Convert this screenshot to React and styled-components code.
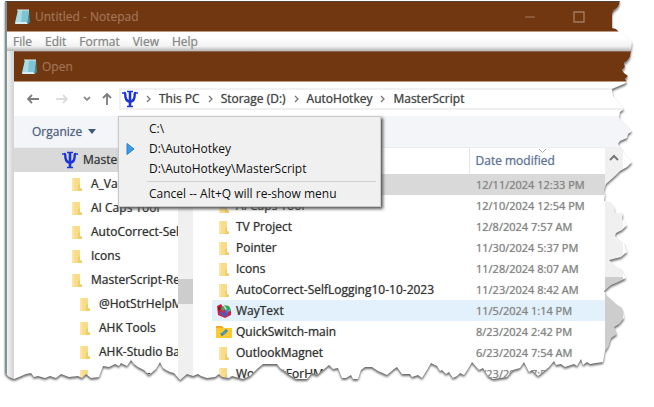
import React from "react";
import styled, { createGlobalStyle } from "styled-components";

const Global = createGlobalStyle`
  *, *::before, *::after { box-sizing: border-box; }
  body { margin: 0; background: #fff; overflow: hidden; }
  button { font: inherit; color: inherit; background: none; border: 0; padding: 0; margin: 0; text-align: left; text-shadow: inherit; cursor: default; white-space: nowrap; }
  ul { list-style: none; margin: 0; padding: 0; }
  svg { flex: none; }
`;

const Page = styled.main`
  position: relative;
  min-height: 100vh;
  overflow: hidden;
  background: #fff;
  font: 12px/20px "Open Sans", "Noto Sans", sans-serif;
  color: #333;
`;

const NotepadWindow = styled.div`
  margin: 1px 20px 0 5px;
  border-left: 2px solid #7f9499;
  border-top: 1px solid #49443c;
`;

const TitleBar = styled.header`
  display: flex;
  align-items: center;
  gap: 4px;
  height: 30px;
  padding: 0 ${(p) => p.$right || 0}px 0 7px;
  background: #703710;
  border-bottom: 1px solid #bd9a84;
  color: #a17254;
  text-shadow: 0 0 1px #8a5838;
`;

const TitleText = styled.span`
  flex: 1;
`;

const CaptionButton = styled.button`
  display: flex;
  align-items: center;
  justify-content: center;
  width: 45px;
  height: 28px;
`;

const MenuBar = styled.nav`
  display: flex;
  gap: 13px;
  height: 19px;
  padding-left: 6px;
  background: linear-gradient(#fff 30%, #f2f2f2 75%, #b5b5b5);
  color: #8a8a8a;
  text-shadow: 0 0 1px #aaa;
  line-height: 18px;
`;

const DialogFrame = styled.div`
  padding-left: 7px;
  background: linear-gradient(90deg, #f4f4f4, #d2d2d2) 0 0 / 7px 100% no-repeat;
`;

const Dialog = styled.section`
  background: #fff;
  border-top: 1px solid #8a6750;
  text-shadow: 0 0 1px #777;
`;

const NavRow = styled.div`
  display: flex;
  align-items: center;
  height: 34px;
  padding-left: 7px;
`;

const NavButton = styled.button`
  display: flex;
  align-items: center;
  justify-content: center;
  width: ${(p) => p.$width}px;
`;

const AddressBar = styled.div`
  display: flex;
  align-items: center;
  flex: 1;
  height: 22px;
  border: 2px solid #f0f0f0;
  border-right: 0;
  padding-left: 1px;
`;

const Crumb = styled.button`
  color: #444;
`;

const Chevron = styled.svg`
  width: 5px;
  height: 8px;
  margin: 0 8px;
`;

const ToolRow = styled.div`
  display: flex;
  align-items: center;
  height: 32px;
  padding-left: 18px;
  background: #f4f5f8;
  border-bottom: 1px solid #eceef2;
  color: #51617c;
  text-shadow: 0 0 1px #8f9bb0;
`;

const Organize = styled.button`
  display: flex;
  align-items: center;
  gap: 6px;
`;

const Browser = styled.div`
  display: flex;
  padding-right: 11px;
`;

const Tree = styled.ul`
  flex: none;
  width: 164px;
  overflow: hidden;
`;

const TreeRow = styled.li`
  height: 24px;
  padding-left: ${(p) => p.$indent}px;
  background: ${(p) => (p.$selected ? "#d9d9d9" : "transparent")};
`;

const TreeButton = styled.button`
  display: flex;
  align-items: center;
  gap: ${(p) => p.$gap}px;
  height: 24px;
  width: 100%;
`;

const ScrollTrack = styled.div`
  flex: none;
  display: flex;
  flex-direction: column;
  align-items: center;
  width: ${(p) => p.$width}px;
  background: #f0f0f0;
`;

const ScrollArrow = styled.button`
  display: flex;
  align-items: center;
  justify-content: center;
  width: 100%;
  height: 18px;
`;

const ScrollThumb = styled.div`
  width: 100%;
  height: ${(p) => p.$height}px;
  margin-top: ${(p) => p.$top}px;
  background: #cdcdcd;
`;

const Listing = styled.div`
  flex: 1;
  padding-left: 19px;
`;

const FileTable = styled.table`
  width: 100%;
  border-collapse: collapse;
  table-layout: fixed;
`;

const HeadCell = styled.th`
  position: relative;
  width: ${(p) => p.$width || "auto"};
  height: 26px;
  padding: 0 0 0 6px;
  border-left: ${(p) => (p.$width ? "1px solid #e6e6e6" : "0")};
  text-align: left;
  font-weight: 400;
  color: #5f7290;
  text-shadow: 0 0 1px #9caabd;
`;

const SortMark = styled.svg`
  position: absolute;
  top: 0;
  left: 68px;
`;

const FileRow = styled.tr`
  height: 21px;
  background: ${(p) => p.$tone || "transparent"};
`;

const NameCell = styled.td`
  padding: 0 0 0 4px;
`;

const FileLabel = styled.div`
  display: flex;
  align-items: center;
  height: 21px;
  gap: 4px;
  white-space: nowrap;
`;

const DateCell = styled.td`
  padding: 0 0 0 7px;
  color: #858585;
  font-size: 11px;
  white-space: nowrap;
  text-shadow: 0 0 1px #999;
`;

const PopupMenu = styled.ul`
  && { padding: 2px; }
  position: absolute;
  left: 118px;
  top: 116px;
  width: 263px;
  background: #f0f0f0;
  border: 1px solid #c8c8c8;
  box-shadow: 2px 2px 3px #555;
  color: #111;
`;

const PopupItem = styled.li`
  height: 20px;
`;

const PopupButton = styled.button`
  display: grid;
  grid-template-columns: 28px 1fr;
  align-items: center;
  width: 100%;
  height: 20px;
`;

const PopupLabel = styled.span`
  grid-column: 2;
`;

const PopupRule = styled.li`
  height: 1px;
  margin: 2px 2px 2px 26px;
  background: #cfcfcf;
`;

const TornEdge = styled.svg`
  position: absolute;
  inset: 0;
  width: 100%;
  height: 100%;
  pointer-events: none;
`;

const NotepadIcon = () => (
  <svg width="17" height="17" viewBox="0 0 17 17" aria-hidden="true">
    <path d="M4 2H15L16 14L14 16H1Z" fill="#4e8792" />
    <path d="M4 2H15L13 15H1Z" fill="#a9dde5" />
    <path d="M8 2H15L13 15H7Z" fill="#7fc4d2" />
    <path d="M2 14L12 14L14 16H1Z" fill="#d5eef2" />
    <path d="M4 1V3M6 1V3M8 1V3M10 1V3M12 1V3M14 1V3" stroke="#d9e9ea" />
  </svg>
);

const PsiIcon = () => (
  <svg width="16" height="18" viewBox="0 0 16 18" aria-hidden="true" fill="none" stroke="#1c35d8">
    <path d="M8 2V16" strokeWidth="2.6" />
    <path d="M2 3C4 3 3 5 3.500 7C4 10 6 11.500 8 11.500C10 11.500 12 10 12.500 7C13 5 12 3 14 3" strokeWidth="2.4" />
    <path d="M5 1.5H11M5 16.5H11M0 3H4M12 3H16" strokeWidth="1.3" />
  </svg>
);

const FolderIcon = () => (
  <svg width="16" height="16" viewBox="0 0 16 16" aria-hidden="true">
    <path d="M3 2H11V12L13 13V15H3Z" fill="#f8dc8a" />
    <path d="M3 2H5V14L3 15Z" fill="#fbe6a6" />
    <path d="M9 9L11 8V12L13 13V15H9Z" fill="#f0cd6c" />
  </svg>
);

const WayTextIcon = () => (
  <svg width="16" height="16" viewBox="0 0 16 16" aria-hidden="true">
    <path d="M1 3L5 1L7 4L12 9L15 7V12L9 15L2 12Z" fill="#d5203a" />
    <path d="M4 8L8 10L12 8V12L8 14L4 11Z" fill="#5a55b8" />
    <path d="M5 5L8 3L9 7L6 8Z" fill="#3fa35a" />
    <path d="M8 2L13 3L15 7L12 8L10 5Z" fill="#39a84f" />
    <path d="M9 7L12 6L13 9L10 10Z" fill="#3688d5" />
    <path d="M2 4L5 3L4 7L2 8Z" fill="#8b1630" />
  </svg>
);

const LinkFolderIcon = () => (
  <svg width="16" height="16" viewBox="0 0 16 16" aria-hidden="true">
    <path d="M0 2H6L8 4H16V14H0Z" fill="#f0a91d" />
    <path d="M0 4H16V14H0Z" fill="#ffc931" />
    <path d="M5 11L8 9M8 9L11 6" stroke="#3a8bb0" strokeWidth="3" />
    <path d="M6 10L10 7" stroke="#69a9a0" strokeWidth="1" />
  </svg>
);

const Sep = () => (
  <Chevron viewBox="0 0 5 8" aria-hidden="true">
    <path d="M1 1L4 4L1 7" fill="none" stroke="#777" strokeWidth="1.3" />
  </Chevron>
);

const Arrow = ({ d, color, w = 14 }) => (
  <svg width={w} height="14" viewBox={`0 0 ${w} 14`} aria-hidden="true">
    <path d={d} fill="none" stroke={color} strokeWidth="1.8" />
  </svg>
);

const treeItems = [
  { name: "MasterScript", indent: 48, icon: PsiIcon, gap: 5, selected: true },
  { name: "A_Variables", indent: 55 },
  { name: "AI Caps Tool", indent: 55 },
  { name: "AutoCorrect-Self", indent: 55 },
  { name: "Icons", indent: 55 },
  { name: "MasterScript-Rel", indent: 55 },
  { name: "@HotStrHelpM", indent: 63 },
  { name: "AHK Tools", indent: 63 },
  { name: "AHK-Studio Ba", indent: 63 },
  { name: "AutoCorrects", indent: 63 },
];

const files = [
  { name: "AutoCorrect2", date: "12/11/2024 12:33 PM", tone: "#d9d9d9" },
  { name: "AI Caps Tool", date: "12/10/2024 12:54 PM" },
  { name: "TV Project", date: "12/8/2024 7:57 AM" },
  { name: "Pointer", date: "11/30/2024 5:37 PM" },
  { name: "Icons", date: "11/28/2024 8:07 AM" },
  { name: "AutoCorrect-SelfLogging10-10-2023", date: "11/23/2024 8:42 AM" },
  { name: "WayText", date: "11/5/2024 1:14 PM", tone: "#e3f1fd", icon: WayTextIcon },
  { name: "QuickSwitch-main", date: "8/23/2024 2:42 PM", icon: LinkFolderIcon },
  { name: "OutlookMagnet", date: "6/23/2024 7:54 AM" },
  { name: "WordListForHM", date: "6/23/2024 7:54 AM" },
];

const paper =
  "M5 0H620L619 5L617 8L614 10L612 14V28L616 29L619 32L627 37L632 42L631 51L630 57L627 61L624 63L625 67L622 70L624 73L628 76L625 79L627 82L624 84L619 86L612 89L613 96L618 102L624 109L620 112L619 118L625 124L632 131L628 134L627 138L620 141L618 144L622 150L626 156L632 162L627 167L620 171L615 176L606 184L604 190L605 195L604 201L610 202L614 207L615 213H623L622 219L627 225L622 230L616 233L615 236L619 240L624 243L627 252L621 257L609 260L615 266L621 269L626 278L618 282L611 285L604 291L607 296L613 301L616 304L622 308L624 318L619 324L614 327L617 334L611 338L608 347L605 351L603 362L596 363L590 364L587 362L583 365L581 359L577 366L574 364L565 367L561 364L556 365L554 361L549 367L542 373L538 376L532 370L529 372L524 362L520 368L513 370L507 377L493 379L488 376L483 368L479 370L472 362L468 369L464 375L460 373L457 376L453 378L449 372L446 374L442 370L440 371L437 366L431 363L427 370L422 378L418 375L412 377L410 374L402 374L397 367L394 369L387 375L378 371L372 367L365 367L361 370L358 379H353L351 375L346 378H342L338 368L333 369L329 365L323 370L317 375L312 373L307 379H296L288 374L280 368L277 364H263L257 369L250 376L243 379L232 376L229 378L222 377L219 374L215 377L207 378L201 376L198 374L193 376L187 374L180 380L174 373L170 372L166 370L163 368L160 362L156 369L149 375L144 370L138 367L134 364L131 360L127 366L121 363L119 366L115 364L109 367L103 366L99 377L91 378L86 374L82 378L78 376L69 377L61 374L56 378L50 376L45 378L38 376L34 377L31 373L26 374L19 377L14 379L9 377L5 373Z";

const outside = `M0 0V420H660V-10H0Z ${paper}`;

export default function App() {
  return (
    <Page>
      <Global />
      <NotepadWindow>
        <TitleBar $right={33}>
          <NotepadIcon />
          <TitleText>Untitled - Notepad</TitleText>
          <CaptionButton aria-label="Minimize">
            <svg width="12" height="12" viewBox="0 0 12 12"><path d="M1 6H11" stroke="#a57a5e" /></svg>
          </CaptionButton>
          <CaptionButton aria-label="Maximize">
            <svg width="12" height="12" viewBox="0 0 12 12"><path d="M1 1H11V11H1Z" fill="none" stroke="#a57a5e" strokeWidth="1.4" /></svg>
          </CaptionButton>
        </TitleBar>
        <MenuBar aria-label="Notepad menu">
          {["File", "Edit", "Format", "View", "Help"].map((m) => (
            <button key={m}>{m}</button>
          ))}
        </MenuBar>
        <DialogFrame>
          <Dialog aria-label="Open">
            <TitleBar>
              <NotepadIcon />
              <TitleText>Open</TitleText>
            </TitleBar>
            <NavRow>
              <NavButton $width={24} aria-label="Back">
                <Arrow d="M13 7H2M6 3L2 7L6 11" color="#7d7d7d" />
              </NavButton>
              <NavButton $width={34} aria-label="Forward">
                <Arrow d="M1 7H12M8 3L12 7L8 11" color="#dcdcdc" />
              </NavButton>
              <NavButton $width={16} aria-label="Recent locations">
                <Arrow d="M1 5L4 8L7 5" color="#8f8f8f" w={8} />
              </NavButton>
              <NavButton $width={24} aria-label="Up">
                <Arrow d="M7 13V2M3 6L7 2L11 6" color="#7d7d7d" />
              </NavButton>
              <AddressBar>
                <PsiIcon />
                <Sep />
                <Crumb>This PC</Crumb>
                <Sep />
                <Crumb>Storage (D:)</Crumb>
                <Sep />
                <Crumb>AutoHotkey</Crumb>
                <Sep />
                <Crumb>MasterScript</Crumb>
              </AddressBar>
            </NavRow>
            <ToolRow>
              <Organize>
                Organize
                <svg width="8" height="5" viewBox="0 0 8 5" aria-hidden="true"><path d="M0 0H8L4 5Z" fill="#3d5878" /></svg>
              </Organize>
            </ToolRow>
            <Browser>
              <Tree>
                {treeItems.map(({ name, indent, icon: Icon = FolderIcon, gap = 6, selected }) => (
                  <TreeRow key={name} $indent={indent} $selected={selected}>
                    <TreeButton $gap={gap}>
                      <Icon />
                      {name}
                    </TreeButton>
                  </TreeRow>
                ))}
              </Tree>
              <ScrollTrack $width={15}>
                <ScrollThumb $top={131} $height={25} />
              </ScrollTrack>
              <Listing>
                <FileTable>
                  <thead>
                    <tr>
                      <HeadCell aria-label="Name" />
                      <HeadCell $width="136px">
                        Date modified
                        <SortMark width="9" height="6" viewBox="0 0 9 6" aria-hidden="true">
                          <path d="M1 1L4.500 4.500L8 1" fill="none" stroke="#aaa" />
                        </SortMark>
                      </HeadCell>
                    </tr>
                  </thead>
                  <tbody>
                    {files.map(({ name, date, tone, icon: Icon = FolderIcon }) => (
                      <FileRow key={name} $tone={tone}>
                        <NameCell>
                          <FileLabel>
                            <Icon />
                            {name}
                          </FileLabel>
                        </NameCell>
                        <DateCell>{date}</DateCell>
                      </FileRow>
                    ))}
                  </tbody>
                </FileTable>
              </Listing>
              <ScrollTrack $width={18}>
                <ScrollArrow aria-label="Scroll up">
                  <svg width="10" height="7" viewBox="0 0 10 7"><path d="M1 6L5 2L9 6" fill="none" stroke="#777" strokeWidth="2" /></svg>
                </ScrollArrow>
                <ScrollThumb $top={111} $height={110} />
              </ScrollTrack>
            </Browser>
          </Dialog>
        </DialogFrame>
      </NotepadWindow>
      <PopupMenu aria-label="Folder switch menu">
        <PopupItem><PopupButton><PopupLabel>C:\</PopupLabel></PopupButton></PopupItem>
        <PopupItem>
          <PopupButton>
            <svg width="16" height="12" viewBox="0 0 16 12" aria-hidden="true"><path d="M6 0.500L13 6L6 11.500Z" fill="#3c9be6" stroke="#2a7fc6" /></svg>
            <PopupLabel>D:\AutoHotkey</PopupLabel>
          </PopupButton>
        </PopupItem>
        <PopupItem><PopupButton><PopupLabel>D:\AutoHotkey\MasterScript</PopupLabel></PopupButton></PopupItem>
        <PopupRule role="separator" />
        <PopupItem><PopupButton><PopupLabel>Cancel -- Alt+Q will re-show menu</PopupLabel></PopupButton></PopupItem>
      </PopupMenu>
      <TornEdge viewBox="0 0 654 407" preserveAspectRatio="none" aria-hidden="true">
        <defs>
          <clipPath id="outside"><path d={outside} clipRule="evenodd" /></clipPath>
          <filter id="soft"><feGaussianBlur stdDeviation="0.8" /></filter>
        </defs>
        <path d={outside} fill="#fff" fillRule="evenodd" />
        <g clipPath="url(#outside)">
          <path d={paper} fill="#666" filter="url(#soft)" transform="translate(0 2)" />
        </g>
      </TornEdge>
    </Page>
  );
}
